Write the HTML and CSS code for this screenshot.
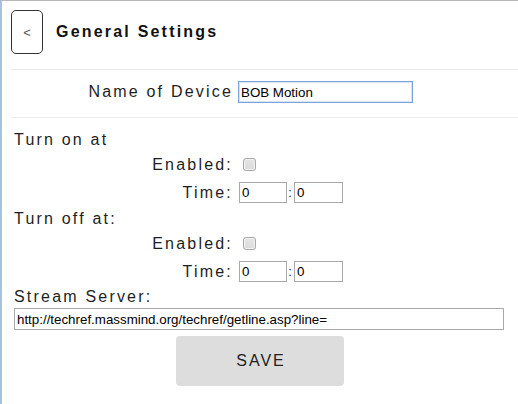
FILE: index.html
```html
<!DOCTYPE html>
<html>
<head>
<meta charset="utf-8">
<link rel="stylesheet" href="styles.css">
</head>
<body>
<div class="page">
  <header class="header">
    <button class="back">&lt;</button>
    <h1 class="title">General Settings</h1>
  </header>
  <div class="name-row">
    <label class="lbl">Name of Device</label>
    <input class="name-input" type="text" value="BOB Motion">
  </div>
  <div class="section">
    <div class="heading">Turn on at</div>
    <div class="row en">
      <label class="lbl">Enabled:</label>
      <input class="check" type="checkbox">
    </div>
    <div class="row time">
      <label class="lbl">Time:</label>
      <input class="t-input" type="text" value="0"><span class="colon">:</span><input class="t-input t2" type="text" value="0">
    </div>
    <div class="heading">Turn off at:</div>
    <div class="row en">
      <label class="lbl">Enabled:</label>
      <input class="check" type="checkbox">
    </div>
    <div class="row time">
      <label class="lbl">Time:</label>
      <input class="t-input" type="text" value="0"><span class="colon">:</span><input class="t-input t2" type="text" value="0">
    </div>
    <div class="heading stream">Stream Server:</div>
    <input class="url-input" type="text" value="http://techref.massmind.org/techref/getline.asp?line=">
    <div class="save-wrap">
      <button class="save">SAVE</button>
    </div>
  </div>
</div>
</body>
</html>
```
FILE: styles.css
```css
* { box-sizing: border-box; }
html, body { margin: 0; padding: 0; }
body {
  width: 518px;
  height: 404px;
  overflow: hidden;
  background: #fff;
  border-left: 2px solid #a9c1e0;
  border-top: 1px solid #b7b7b7;
  font-family: "Liberation Sans", Arial, sans-serif;
  color: #1e1e1e;
}
.page {
  padding-left: 9px;
}
.header {
  display: flex;
  align-items: center;
  padding-top: 9px;
  padding-bottom: 15px;
  border-bottom: 1px solid #e8e8e8;
}
.back {
  width: 32px;
  height: 44px;
  border: 1px solid #333;
  border-radius: 5px;
  background: #fff;
  color: #555;
  font-family: "Liberation Sans", Arial, sans-serif;
  font-size: 13px;
  padding: 0;
  margin: 0;
}
.title {
  margin: 0 0 0 13px;
  font-size: 16px;
  font-weight: bold;
  letter-spacing: 2.2px;
  color: #111;
}
.name-row {
  display: flex;
  align-items: center;
  padding: 11px 0 14px 3px;
  border-bottom: 1px solid #eee;
}
.lbl {
  width: 219px;
  text-align: right;
  font-size: 16px;
  letter-spacing: 2.2px;
  flex: none;
}
.name-input {
  margin: 0 0 0 5px;
  width: 175px;
  height: 22px;
  border: 1px solid #7ea3dd;
  outline: none;
  padding: 1px 2px;
  font-family: "Liberation Sans", Arial, sans-serif;
  font-size: 13.333px;
  color: #000;
  box-shadow: inset 0 0 0 1px #d6e3f5;
}
.section {
  padding: 10px 0 0 3px;
}
.heading {
  font-size: 16px;
  letter-spacing: 2.2px;
  line-height: 24px;
  height: 24px;
}
.heading.stream {
  line-height: 22px;
  height: 22px;
}
.row {
  display: flex;
  align-items: center;
}
.row.en { height: 25px; }
.row.time { height: 30px; padding: 5px 0 4px; }
.check {
  -webkit-appearance: none;
  appearance: none;
  margin: 0 0 0 10px;
  width: 13px;
  height: 13px;
  border: 1px solid #a8a8a8;
  border-radius: 3px;
  background: linear-gradient(#e4e4e4, #dcdcdc);
  box-shadow: inset 0 0 0 1px #f2f2f2;
}
.t-input {
  margin: 0 0 0 6px;
  width: 48px;
  height: 21px;
  border: 1px solid #a9a9a9;
  padding: 1px 2px;
  font-family: "Liberation Sans", Arial, sans-serif;
  font-size: 13.333px;
  color: #000;
  outline: none;
}
.t-input.t2 { margin-left: 1px; width: 49px; }
.colon {
  font-size: 13px;
  width: 6px;
  text-align: center;
}
.url-input {
  display: block;
  margin: 0;
  width: 490px;
  height: 22px;
  border: 1px solid #a9a9a9;
  padding: 1px 2px;
  font-family: "Liberation Sans", Arial, sans-serif;
  font-size: 13.333px;
  color: #000;
  outline: none;
}
.save-wrap {
  display: flex;
  justify-content: center;
  padding-top: 6px;
  margin-left: -12px;
}
.save {
  width: 168px;
  height: 50px;
  border: none;
  border-radius: 4px;
  background: #dddddd;
  color: #222;
  font-family: "Liberation Sans", Arial, sans-serif;
  font-size: 16px;
  letter-spacing: 2px;
  padding: 0 0 0 2px;
}
```
